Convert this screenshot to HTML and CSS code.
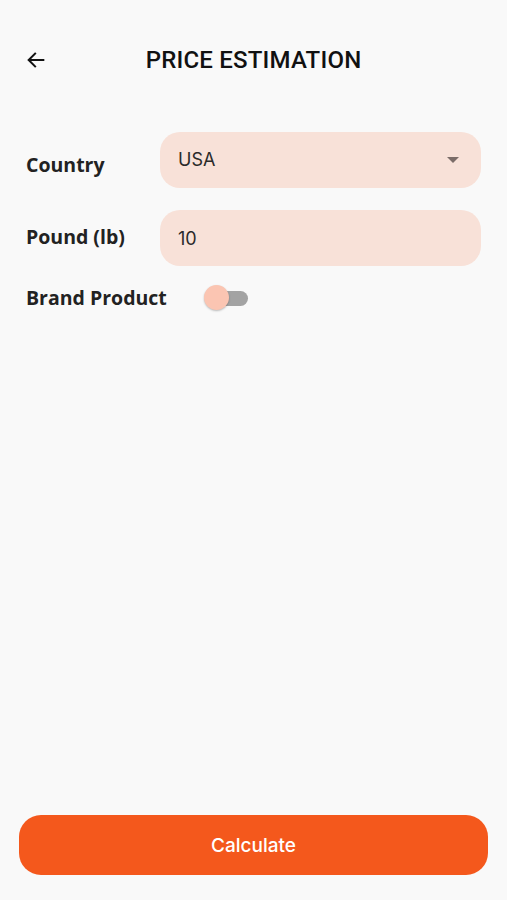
FILE: index.html
```html
<!DOCTYPE html>
<html lang="en">
<head>
    <meta charset="UTF-8">
    <meta name="viewport" content="width=device-width, initial-scale=1.0">
    <title>Price Estimation</title>
    <link rel="stylesheet" href="styles.css">
</head>
<body>
    <div class="screen">
        <div class="status-bar"></div>

        <header class="app-bar">
            <button class="back-btn" type="button" aria-label="Back">
                <svg width="22" height="22" viewBox="0 0 24 24">
                    <path d="M20 12H4.5M11 5l-7 7 7 7" fill="none" stroke="#111" stroke-width="2.2" stroke-linecap="square"/>
                </svg>
            </button>
            <h1 class="title">PRICE ESTIMATION</h1>
        </header>

        <main class="form">
            <div class="row">
                <label class="label label-down" for="country">Country</label>
                <div class="field select">
                    <span class="field-text">USA</span>
                    <span class="caret"></span>
                </div>
            </div>

            <div class="row">
                <label class="label label-up" for="pound">Pound (lb)</label>
                <div class="field">
                    <span class="field-text field-text-mid">10</span>
                </div>
            </div>

            <div class="row row-switch">
                <span class="label">Brand Product</span>
                <div class="switch">
                    <span class="track"></span>
                    <span class="thumb"></span>
                </div>
            </div>
        </main>

        <footer class="actions">
            <button class="calc-btn" type="button">Calculate</button>
        </footer>
    </div>
</body>
</html>
```

FILE: styles.css
```css
* {
    box-sizing: border-box;
}

body {
    margin: 0;
    padding: 0;
    background-color: #f9f9f9;
    font-family: Inter, "Noto Sans", sans-serif;
    color: #1c1c1c;
}

.screen {
    width: 507px;
    height: 900px;
    display: flex;
    flex-direction: column;
}

.status-bar {
    height: 30px;
}

.app-bar {
    height: 60px;
    display: flex;
    align-items: center;
    padding: 0 24px;
}

.back-btn {
    background: none;
    border: none;
    padding: 0;
    width: 24px;
    height: 24px;
    display: flex;
    align-items: center;
    justify-content: center;
    cursor: pointer;
}

.title {
    flex: 1;
    margin: 0 24px 0 0;
    text-align: center;
    font-family: Roboto, sans-serif;
    font-weight: 500;
    font-size: 24px;
    letter-spacing: 0.2px;
    color: #111;
}

.form {
    flex: 1;
    padding: 42px 26px 0 26px;
    display: flex;
    flex-direction: column;
    gap: 22px;
}

.row {
    display: flex;
    align-items: center;
}

.label {
    width: 134px;
    flex-shrink: 0;
    white-space: nowrap;
    font-family: "Open Sans", sans-serif;
    font-weight: 700;
    font-size: 19.5px;
    color: #222;
}

.label-down {
    margin-top: 8px;
}

.label-up {
    margin-top: -4px;
}

.field {
    flex: 1;
    height: 56px;
    background-color: #f8e1d8;
    border-radius: 20px;
    padding: 0 18px;
    display: flex;
    align-items: center;
}

.field-text {
    font-size: 18px;
    color: #2a2a2a;
    margin-top: -2px;
}

.field-text-mid {
    margin-top: 0;
}

.select {
    justify-content: space-between;
}

.caret {
    width: 0;
    height: 0;
    border-left: 6px solid transparent;
    border-right: 6px solid transparent;
    border-top: 6px solid #7b6c68;
    margin-right: 4px;
}

.row-switch {
    margin-top: -4px;
}

.switch {
    position: relative;
    width: 46px;
    height: 26px;
    margin-left: 44px;
}

.track {
    position: absolute;
    left: 8px;
    top: 6px;
    width: 36px;
    height: 15px;
    border-radius: 8px;
    background-color: #a3a3a3;
}

.thumb {
    position: absolute;
    left: 0;
    top: 0;
    width: 25px;
    height: 25px;
    border-radius: 50%;
    background-color: #fbc5b2;
    box-shadow: 0 1px 2px rgba(0, 0, 0, 0.25);
}

.actions {
    padding: 0 19px 25px 19px;
}

.calc-btn {
    width: 100%;
    height: 60px;
    border: none;
    border-radius: 22px;
    background-color: #f4581c;
    color: #fff;
    font-family: Inter, sans-serif;
    font-size: 19px;
    font-weight: 500;
    cursor: pointer;
}
```
